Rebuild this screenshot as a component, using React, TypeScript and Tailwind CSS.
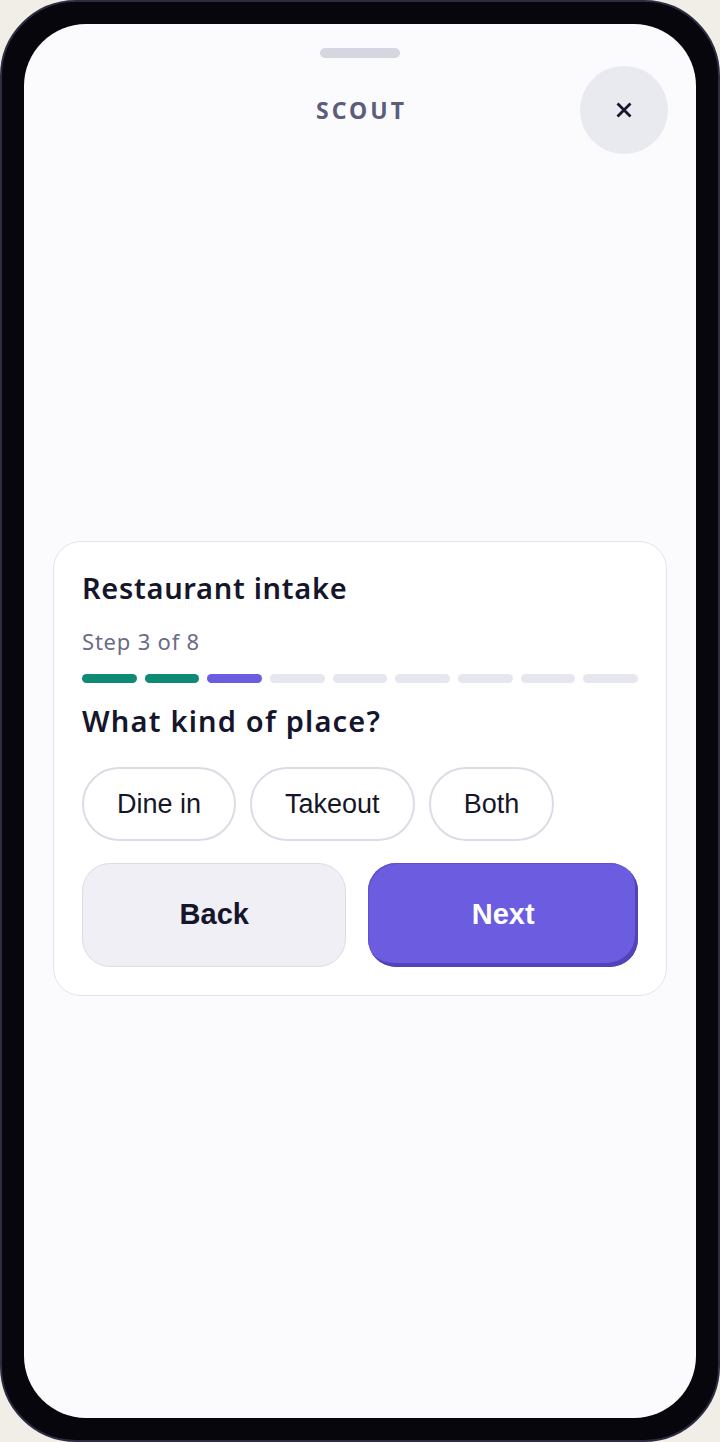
import { useState } from "react";

const STEPS = 8;
const SEGMENTS = 9;
const OPTIONS = ["Dine in", "Takeout", "Both"];

export default function App() {
  const [choice, setChoice] = useState<string | null>(null);
  const current = 3;

  return (
    <div className="w-[720px] h-[1442px] bg-[#f1eee7]">
      {/* phone frame */}
      <div className="h-full rounded-[76px] bg-[#06060c] border-2 border-[#2d2c42] p-[22px]">
        <div className="h-full rounded-[62px] bg-[#fbfbfe] overflow-hidden flex flex-col font-['Noto_Sans','Open_Sans',sans-serif]">
          {/* sheet handle */}
          <div className="mt-[24px] mx-auto w-20 h-[10px] rounded-full bg-[#d6d6e0]" />

          {/* header */}
          <div className="mt-[8px] px-[28px] grid grid-cols-[88px_1fr_88px] items-center">
            <div />
            <div className="text-center text-[23px] font-bold tracking-[3px] pl-[3px] text-[#5c5c7b]">SCOUT</div>
            <button className="w-[88px] h-[88px] rounded-full bg-[#e9e9f0] flex items-center justify-center">
              <svg width="16" height="16" viewBox="0 0 16 16">
                <path d="M1.5 1.5 L14.5 14.5 M14.5 1.5 L1.5 14.5" stroke="#16162a" strokeWidth="2.8" />
              </svg>
            </button>
          </div>

          {/* intake card */}
          <div className="mt-[387px] mx-[29px] rounded-[28px] border-[1.5px] border-[#e3e3ea] bg-white px-[28px] pt-[28px] pb-[28px]">
            <h1 className="text-[29px] leading-[36px] font-semibold tracking-[0.7px] text-[#15152b]">Restaurant intake</h1>
            <div className="mt-[21px] text-[22px] leading-[28px] tracking-[0.8px] text-[#6b6b86]">
              Step {current} of {STEPS}
            </div>

            <div className="mt-[19px] flex gap-2">
              {Array.from({ length: SEGMENTS }).map((_, i) => (
                <div
                  key={i}
                  className={`flex-1 h-[9px] rounded-full ${
                    i < current - 1 ? "bg-[#0f8a74]" : i === current - 1 ? "bg-[#6b5ce0]" : "bg-[#e6e6ee]"
                  }`}
                />
              ))}
            </div>

            <h2 className="mt-[20px] text-[29px] leading-[36px] font-semibold tracking-[1.2px] text-[#15152b]">
              What kind of place?
            </h2>

            <div className="mt-[28px] flex gap-[14px] font-['Liberation_Sans',Arial,sans-serif]">
              {OPTIONS.map((o) => (
                <button
                  key={o}
                  onClick={() => setChoice(o)}
                  className={`h-[74px] px-[33px] rounded-full border-2 text-[27px] leading-none text-[#16162a] ${
                    choice === o ? "border-[#6b5ce0] bg-[#f1effd]" : "border-[#dcdce6] bg-white"
                  }`}
                >
                  {o}
                </button>
              ))}
            </div>

            <div className="mt-[22px] grid grid-cols-[264fr_269fr] gap-[22px] font-['Liberation_Sans',Arial,sans-serif]">
              <button className="h-[104px] rounded-[28px] border-[1.5px] border-[#dcdce6] bg-[#efeff5] text-[29px] font-bold text-[#15152b]">
                Back
              </button>
              <button className="h-[104px] rounded-[28px] bg-[#6b5ce0] shadow-[inset_-3px_-4px_0_#5144b6,inset_1px_1px_0_#5e50cc] text-[29px] font-bold text-white">
                Next
              </button>
            </div>
          </div>
        </div>
      </div>
    </div>
  );
}
